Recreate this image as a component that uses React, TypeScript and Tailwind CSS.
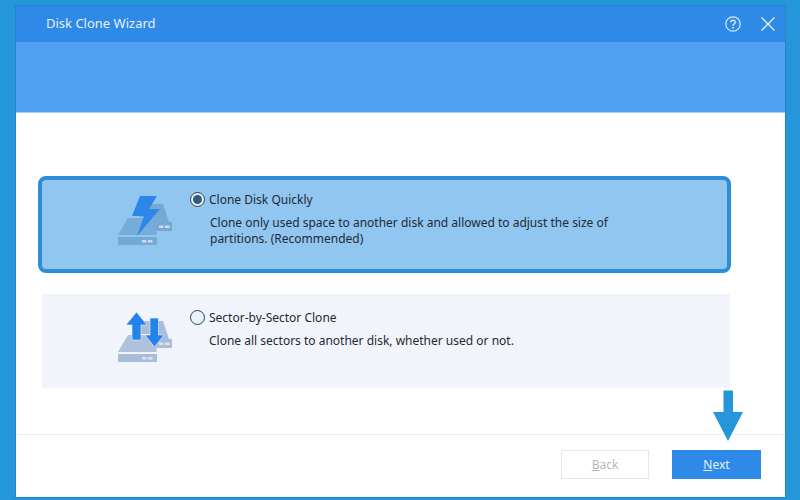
import type { ReactNode } from 'react';

// Pair of drives shared by both option icons
function Drives({ color }: { color: string }) {
  return (
    <g fill={color}>
      <path d="M24 12h21l6 18h-15l-1-5h-14z" />
      <path d="M36 30h18v9h-18z" />
      <path d="M10 26h26l3 17h-39z" opacity="0.92" />
      <path d="M0 45h39v8h-39z" />
      <g fill="#ffffff" opacity="0.6">
        <rect x="41" y="33.500" width="4.500" height="2.500" />
        <rect x="47" y="33.500" width="4.500" height="2.500" />
        <rect x="24" y="48" width="4.500" height="2.500" />
        <rect x="30" y="48" width="4.500" height="2.500" />
      </g>
    </g>
  );
}

function QuickIcon() {
  return (
    <svg width="54" height="54" viewBox="0 0 54 54" className="mt-[1px] shrink-0">
      <Drives color="#74a9d6" />
      <path d="M22 4h17l-8 13h11l-23 27 7-20h-12z" fill="#2e86ea" />
    </svg>
  );
}

function SectorIcon() {
  return (
    <svg width="54" height="54" viewBox="0 0 54 54" className="shrink-0">
      <Drives color="#a9bcd8" />
      <path d="M18.500 3l10.500 13h-6v15h-9v-15h-6z" fill="#2283ea" stroke="#f1f4fa" strokeWidth="0.600" />
      <path d="M32 9h8.500v17h5.500l-9.500 12-9.500-12h5z" fill="#2283ea" stroke="#f1f4fa" strokeWidth="0.600" />
    </svg>
  );
}

function Radio({ checked }: { checked?: boolean }) {
  return (
    <span className="flex h-[15px] w-[15px] shrink-0 items-center justify-center rounded-full border border-[#2c3e50] bg-[#e8f2fb]">
      {checked && <span className="h-[9px] w-[9px] rounded-full bg-[#2f5b85]" />}
    </span>
  );
}

function Option({ icon, title, checked, children, className }: { icon: ReactNode; title: string; checked?: boolean; children: ReactNode; className: string }) {
  return (
    <div className={className}>
      {icon}
      <div className="ml-[18px] flex-1">
        <div className="flex items-center gap-[4px] text-[12px] leading-[16px] text-[#1f2a36]">
          <Radio checked={checked} />
          <span className="translate-y-px">{title}</span>
        </div>
        {children}
      </div>
    </div>
  );
}

export default function App() {
  return (
    <div className="relative h-[500px] w-[800px] overflow-hidden bg-[#2596d9] pb-[2px] pl-[15px] pr-[14px] pt-[5px] font-['Noto_Sans',sans-serif]">
      <div className="flex h-full flex-col border border-[#2a80cc] bg-white">
        <div className="flex h-[36px] shrink-0 items-center bg-[#2e8ae6] pl-[30px] pr-[10px]">
          <span className="text-[13px] text-[#e4f0fd]">Disk Clone Wizard</span>
          <svg width="16" height="16" viewBox="0 0 16 16" fill="none" stroke="#dcecfd" strokeWidth="1.200" className="ml-auto">
            <circle cx="8" cy="8" r="7.200" />
            <path d="M5.800 6.300c0-1.300 1-2.100 2.200-2.100s2.200.8 2.200 2c0 1.800-2.200 1.700-2.200 3.500" strokeWidth="1.400" />
            <circle cx="8" cy="11.700" r="0.900" fill="#dcecfd" stroke="none" />
          </svg>
          <svg width="14" height="14" viewBox="0 0 14 14" fill="none" stroke="#e4f0fd" strokeWidth="1.300" className="ml-[20px]">
            <path d="M0.500 0.500l13 13M13.500 0.500l-13 13" />
          </svg>
        </div>
        <div className="h-[71px] shrink-0 border-b border-[#a9cdf5] bg-[#519ff3]" />

        <div className="flex flex-1 flex-col pl-[22px] pr-[54px] pt-[63px]">
          <Option
            icon={<QuickIcon />}
            title="Clone Disk Quickly"
            checked
            className="flex h-[97px] items-start rounded-[8px] border-[4px] border-[#2b8ed6] bg-[#90c6f0] pl-[76px] pr-[100px] pt-[11px]"
          >
            <p className="ml-[20px] mt-[8px] text-[12px] leading-[16px] text-[#1f2a36]">
              Clone only used space to another disk and allowed to adjust the size of partitions. (Recommended)
            </p>
          </Option>
          <Option
            icon={<SectorIcon />}
            title="Sector-by-Sector Clone"
            className="ml-[4px] mr-[1px] mt-[21px] flex h-[94px] items-start bg-[#f1f4fa] pl-[76px] pr-[100px] pt-[15px]"
          >
            <p className="ml-[19px] mt-[8px] text-[12px] leading-[16px] text-[#1f2a36]">
              Clone all sectors to another disk, whether used or not.
            </p>
          </Option>
        </div>

        <div className="flex h-[63px] shrink-0 items-start justify-end gap-[23px] border-t border-[#e6edf5] pr-[24px] pt-[15px]">
          <button className="h-[29px] w-[88px] border border-[#e3e8ef] bg-white text-[12px] text-[#b5b9be]">
            <span className="underline">B</span>ack
          </button>
          <button className="h-[29px] w-[89px] bg-[#2e8ae6] text-[12px] text-[#e4f0fd]">
            <span className="underline">N</span>ext
          </button>
        </div>
      </div>

      {/* pointer drawn over the screenshot */}
      <svg width="30" height="51" viewBox="0 0 30 51" className="absolute left-[713px] top-[390px]">
        <path d="M10.500 0.500h9.500v21.500h10l-15 29-15-29h10.500z" fill="#2596d9" />
      </svg>
    </div>
  );
}
